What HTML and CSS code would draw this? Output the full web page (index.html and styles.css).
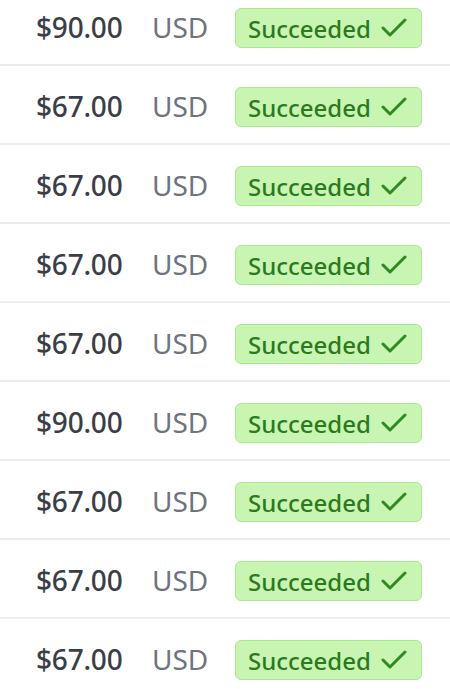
FILE: index.html
```html
<!DOCTYPE html>
<html>
<head>
<meta charset="utf-8">
<link rel="stylesheet" href="styles.css">
</head>
<body>
<div class="list">
  <div class="row"><span class="amount">$90.00</span><span class="cur">USD</span><span class="badge">Succeeded<svg class="check" viewBox="0 0 26 20"><path d="M2 10 L9 17 L24 2"/></svg></span></div>
  <div class="row"><span class="amount">$67.00</span><span class="cur">USD</span><span class="badge">Succeeded<svg class="check" viewBox="0 0 26 20"><path d="M2 10 L9 17 L24 2"/></svg></span></div>
  <div class="row"><span class="amount">$67.00</span><span class="cur">USD</span><span class="badge">Succeeded<svg class="check" viewBox="0 0 26 20"><path d="M2 10 L9 17 L24 2"/></svg></span></div>
  <div class="row"><span class="amount">$67.00</span><span class="cur">USD</span><span class="badge">Succeeded<svg class="check" viewBox="0 0 26 20"><path d="M2 10 L9 17 L24 2"/></svg></span></div>
  <div class="row"><span class="amount">$67.00</span><span class="cur">USD</span><span class="badge">Succeeded<svg class="check" viewBox="0 0 26 20"><path d="M2 10 L9 17 L24 2"/></svg></span></div>
  <div class="row"><span class="amount">$90.00</span><span class="cur">USD</span><span class="badge">Succeeded<svg class="check" viewBox="0 0 26 20"><path d="M2 10 L9 17 L24 2"/></svg></span></div>
  <div class="row"><span class="amount">$67.00</span><span class="cur">USD</span><span class="badge">Succeeded<svg class="check" viewBox="0 0 26 20"><path d="M2 10 L9 17 L24 2"/></svg></span></div>
  <div class="row"><span class="amount">$67.00</span><span class="cur">USD</span><span class="badge">Succeeded<svg class="check" viewBox="0 0 26 20"><path d="M2 10 L9 17 L24 2"/></svg></span></div>
  <div class="row"><span class="amount">$67.00</span><span class="cur">USD</span><span class="badge">Succeeded<svg class="check" viewBox="0 0 26 20"><path d="M2 10 L9 17 L24 2"/></svg></span></div>
</div>
</body>
</html>
```
FILE: styles.css
```css
html, body {
  margin: 0;
  padding: 0;
  background: #ffffff;
  overflow: hidden;
}
body {
  font-family: "Noto Sans", "Open Sans", sans-serif;
}
.list {
  margin-top: -13px;
}
.row {
  display: grid;
  grid-template-columns: 116px 83px auto;
  align-items: center;
  box-sizing: border-box;
  height: 79px;
  padding-left: 36px;
  padding-top: 2px;
  border-bottom: 2px solid #ededed;
}
.amount {
  font-size: 28px;
  font-weight: 500;
  color: #3b3e46;
  letter-spacing: -0.2px;
}
.cur {
  font-size: 28px;
  font-weight: 400;
  color: #6f737c;
}
.badge {
  display: inline-flex;
  align-items: center;
  justify-self: start;
  box-sizing: border-box;
  width: 187px;
  height: 40px;
  margin-top: 3px;
  padding-left: 12px;
  gap: 10px;
  background: #c9f5b3;
  border: 1px solid #a8e88f;
  border-radius: 6px;
  font-size: 24px;
  font-weight: 500;
  color: #2c7a1e;
}
.check {
  width: 26px;
  height: 20px;
  fill: none;
  stroke: #2f8a1f;
  stroke-width: 3;
  stroke-linecap: round;
  stroke-linejoin: round;
}
```
